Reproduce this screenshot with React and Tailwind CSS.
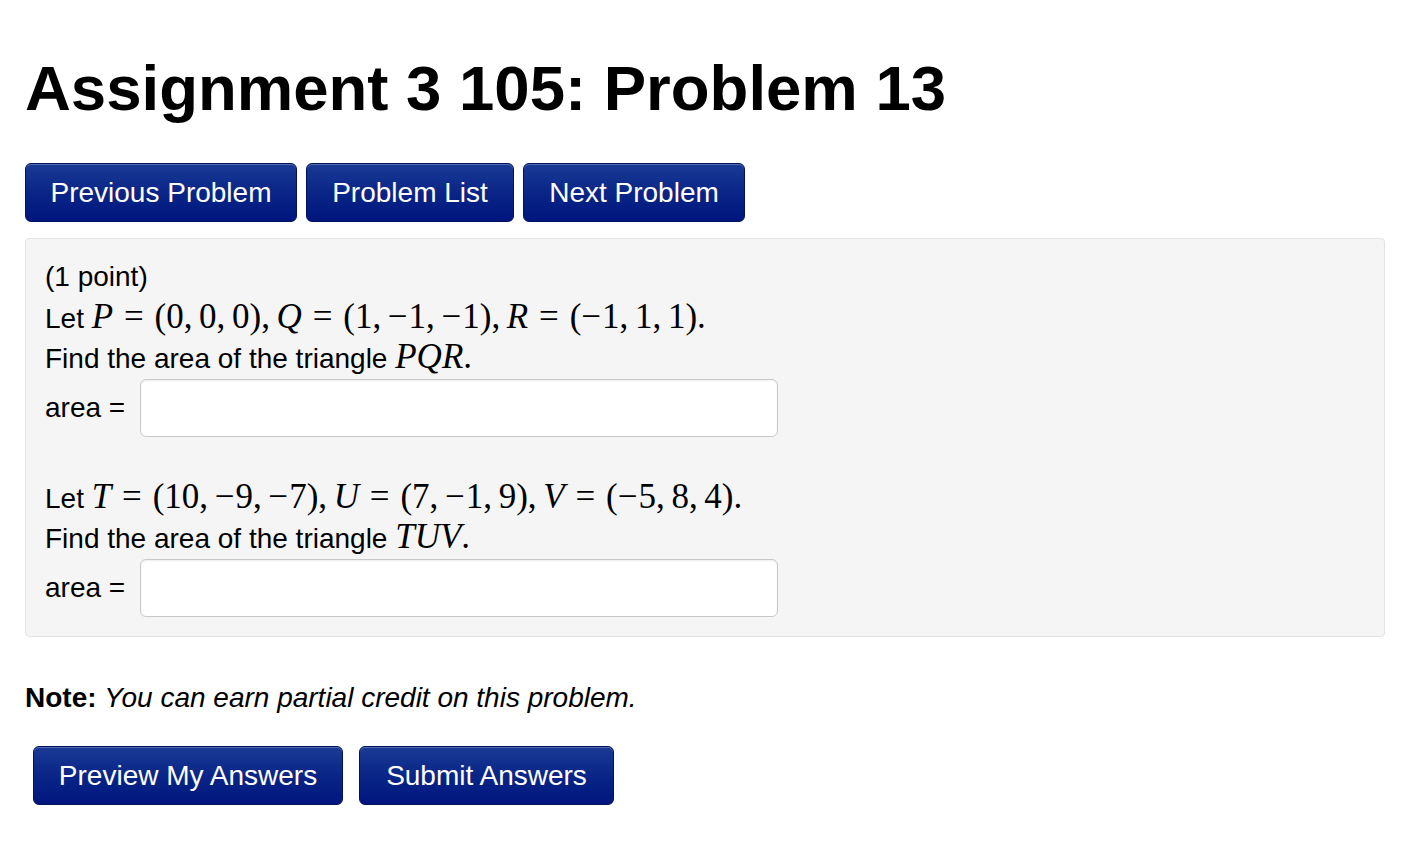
import React from 'react';

const sans = { fontFamily: '"Liberation Sans", Arial, sans-serif' };

const NavButton = ({ children, className = '' }) => (
  <button
    className={`h-[59px] rounded-[6px] border border-[#00115e] bg-gradient-to-b from-[#1a3a95] via-[#0a2587] to-[#00157e] text-white text-[28px] leading-none shadow-[inset_0_1px_0_rgba(255,255,255,0.25)] ${className}`}
    style={sans}
  >
    {children}
  </button>
);

// little helpers for the typeset maths
const Mv = ({ children }) => <span className="italic">{children}</span>;
const Eq = () => <span className="mx-[0.31em]">=</span>;
const Minus = () => <span className="mr-[0.03em]">−</span>;
const Comma = () => <span className="mr-[0.19em]">,</span>;

const MathLine = ({ children }) => (
  <span className="text-[35px] leading-[28px]" style={{ fontFamily: '"Liberation Serif", "Times New Roman", serif' }}>
    {children}
  </span>
);

const Tuple = ({ items }) => (
  <>
    (
    {items.map((it, i) => (
      <React.Fragment key={i}>
        {it.startsWith('-') ? (
          <>
            <Minus />
            {it.slice(1)}
          </>
        ) : (
          it
        )}
        {i < items.length - 1 && <Comma />}
      </React.Fragment>
    ))}
    )
  </>
);

const AnswerRow = () => (
  <div className="flex items-center h-[58px]">
    <span>area =</span>
    <input
      type="text"
      className="ml-[15px] w-[638px] h-[58px] bg-white border border-[#c8c8c8] rounded-[6px] shadow-[inset_0_1px_2px_rgba(0,0,0,0.08)] outline-none"
    />
  </div>
);

export default function App() {
  return (
    <div className="min-h-screen bg-white text-black px-[25px]" style={sans}>
      <h1 className="pt-[53px] text-[63.5px] leading-[70px] font-bold">
        Assignment 3 105: Problem 13
      </h1>

      <div className="flex gap-[9px] mt-[40px]">
        <NavButton className="w-[272px]">Previous Problem</NavButton>
        <NavButton className="w-[208px]">Problem List</NavButton>
        <NavButton className="w-[222px]">Next Problem</NavButton>
      </div>

      <div className="mt-[16px] w-[1360px] bg-[#f5f5f5] border border-[#e3e3e3] rounded-[4px] pl-[19px] pt-[18px] pb-[19px] text-[28px] leading-[40px]">
        <div>(1 point)</div>
        <div className="mt-[2px]">
          Let{' '}
          <MathLine>
            <Mv>P</Mv>
            <Eq />
            <Tuple items={['0', '0', '0']} />
            <Comma />
            <Mv>Q</Mv>
            <Eq />
            <Tuple items={['1', '-1', '-1']} />
            <Comma />
            <Mv>R</Mv>
            <Eq />
            <Tuple items={['-1', '1', '1']} />.
          </MathLine>
        </div>
        <div>
          Find the area of the triangle{' '}
          <MathLine>
            <Mv>PQR</Mv>.
          </MathLine>
        </div>
        <AnswerRow />

        <div className="mt-[42px]">
          Let{' '}
          <MathLine>
            <Mv>T</Mv>
            <Eq />
            <Tuple items={['10', '-9', '-7']} />
            <Comma />
            <Mv>U</Mv>
            <Eq />
            <Tuple items={['7', '-1', '9']} />
            <Comma />
            <Mv>V</Mv>
            <Eq />
            <Tuple items={['-5', '8', '4']} />.
          </MathLine>
        </div>
        <div>
          Find the area of the triangle{' '}
          <MathLine>
            <Mv>TUV</Mv>.
          </MathLine>
        </div>
        <AnswerRow />
      </div>

      <p className="mt-[41px] text-[28px] leading-[40px]">
        <span className="font-bold">Note:</span> <em>You can earn partial credit on this problem.</em>
      </p>

      <div className="flex gap-[16px] mt-[28px] pl-[8px]">
        <NavButton className="w-[310px]">Preview My Answers</NavButton>
        <NavButton className="w-[255px]">Submit Answers</NavButton>
      </div>
    </div>
  );
}
